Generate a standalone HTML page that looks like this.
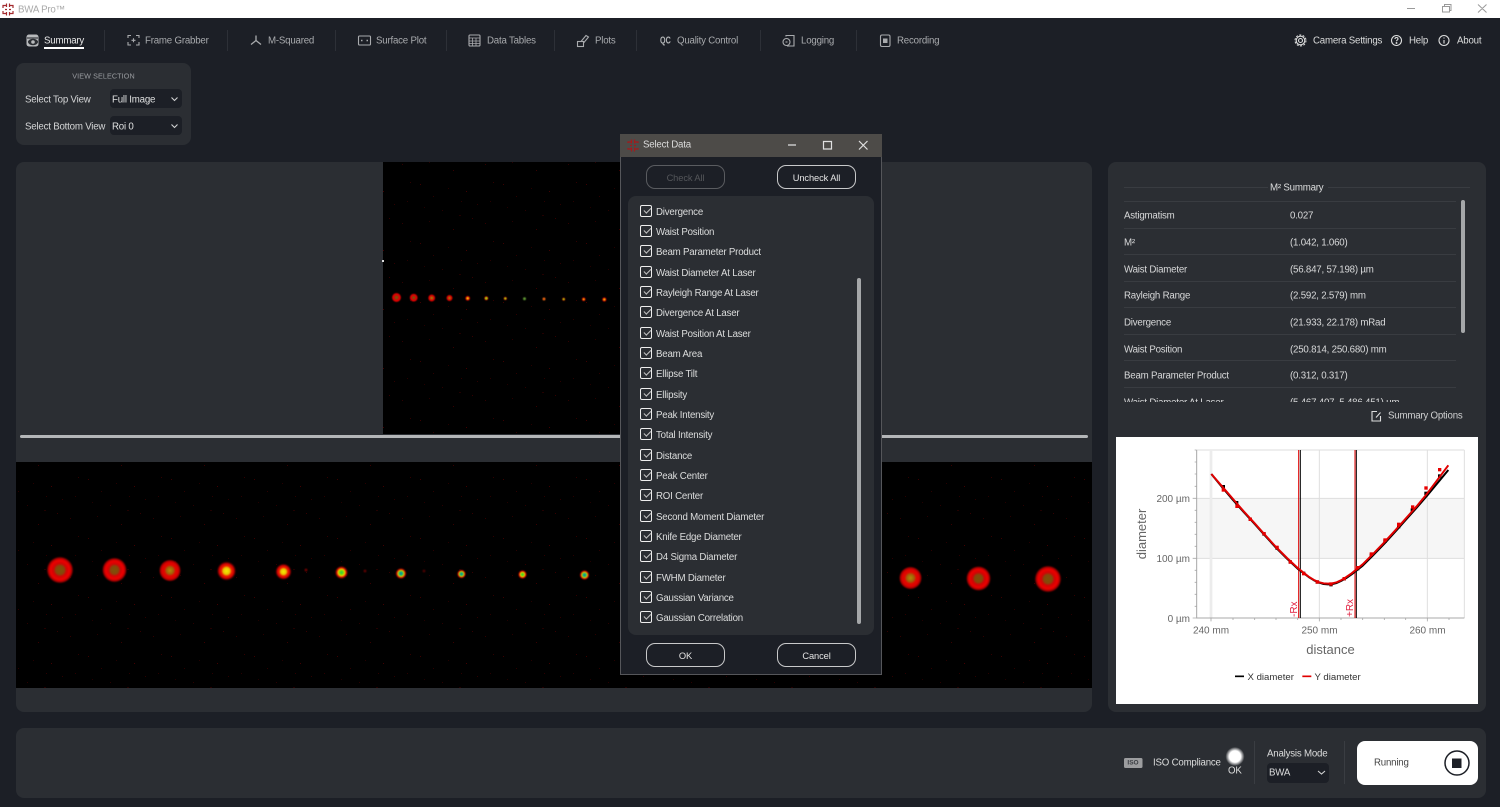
<!DOCTYPE html>
<html lang="en"><head><meta charset="utf-8"><title>BWA Pro</title>
<style>
html,body{margin:0;padding:0;width:1500px;height:807px;overflow:hidden;background:#1c1f26;font-family:"Liberation Sans",sans-serif;font-size:9.7px;color:#d8d9da}
div,span{position:absolute;box-sizing:border-box}
.t{white-space:nowrap;line-height:14px;height:14px;letter-spacing:-.2px;transform:translateY(1.5px)}
.nav{color:#a9abae;top:33px}
.sep{width:1px;top:30px;height:21px;background:#2d3037}
.panel{background:#2b2e33;border-radius:8px}
.sel{background:#1c1f26;border-radius:4px}
.row{left:0;width:230px;height:14px;line-height:17px;white-space:nowrap;letter-spacing:-.2px;padding-left:28px;color:#dcdddd}
.row:before{content:"";position:absolute;left:12px;top:1px;width:12px;height:12px;border:1.4px solid #eee;border-radius:2px;box-sizing:border-box}
.row:after{content:"";position:absolute;left:15.5px;top:3.5px;width:5.5px;height:3px;border-left:1px solid #c4c4c4;border-bottom:1px solid #c4c4c4;transform:rotate(-45deg)}
.btn{border:1px solid #c8c9ca;border-radius:9px;text-align:center;line-height:24px;height:24px;width:79px;color:#e4e4e4;font-size:9.3px;letter-spacing:-.1px}
.line{left:16px;width:332px;height:1px;background:#393c41}
.k{left:16px}.v{left:182px}
svg{position:absolute;left:0;top:0}
</style></head><body>

<!-- title bar -->
<div style="left:0;top:0;width:1500px;height:18px;background:#fff"></div>
<div class="t" style="left:18px;top:2px;color:#a8a8a8">BWA Pro™</div>

<!-- view selection -->
<div class="panel" style="left:16px;top:63px;width:175px;height:82px"></div>
<div class="t" style="left:16px;width:175px;text-align:center;top:68px;font-size:7.2px;color:#9a9da1;letter-spacing:.1px">VIEW SELECTION</div>
<div class="t" style="left:25px;top:91.500px;color:#d5d6d7">Select Top View</div>
<div class="t" style="left:25px;top:118.500px;color:#d5d6d7">Select Bottom View</div>
<div class="sel" style="left:110px;top:89px;width:72px;height:19px"></div>
<div class="sel" style="left:110px;top:116px;width:72px;height:19px"></div>
<div class="t" style="left:112px;top:91.500px;color:#dfe0e0">Full Image</div>
<div class="t" style="left:112px;top:118.500px;color:#dfe0e0">Roi 0</div>

<!-- nav -->
<div class="t" style="left:44px;top:33px;color:#e8e8e8">Summary</div>
<div style="left:44px;top:47px;width:40px;height:2px;background:#fff"></div>
<div class="t nav" style="left:145px">Frame Grabber</div>
<div class="t nav" style="left:268px">M-Squared</div>
<div class="t nav" style="left:376px">Surface Plot</div>
<div class="t nav" style="left:487px">Data Tables</div>
<div class="t nav" style="left:595px">Plots</div>
<div class="t nav" style="left:677px">Quality Control</div>
<div class="t nav" style="left:801px">Logging</div>
<div class="t nav" style="left:897px">Recording</div>
<div class="t nav" style="left:660px;font-weight:bold;color:#b4b6b8;font-size:10px;letter-spacing:0;transform:translateY(1.5px) scaleX(.72);transform-origin:0 0">QC</div>
<div class="sep" style="left:104px"></div><div class="sep" style="left:227px"></div><div class="sep" style="left:335px"></div><div class="sep" style="left:446px"></div><div class="sep" style="left:554px"></div><div class="sep" style="left:636px"></div><div class="sep" style="left:760px"></div><div class="sep" style="left:856px"></div>
<div class="t" style="left:1313px;top:33px;color:#dcdddd">Camera Settings</div>
<div class="t" style="left:1409px;top:33px;color:#dcdddd">Help</div>
<div class="t" style="left:1457px;top:33px;color:#dcdddd">About</div>

<!-- main panels -->
<div class="panel" style="left:16px;top:162px;width:1076px;height:550px"></div>
<div style="left:383px;top:162px;width:272px;height:272px;background:#000"></div>
<div style="left:20px;top:435px;width:1068px;height:3px;background:#b4b6b8;border-radius:2px"></div>
<div style="left:16px;top:462px;width:1076px;height:226px;background:#000"></div>
<div class="panel" style="left:1108px;top:162px;width:378px;height:550px"></div>
<div class="panel" style="left:16px;top:728px;width:1470px;height:70px"></div>

<!-- beam images + all icons -->
<svg width="1500" height="807" viewBox="0 0 1500 807">
<defs>
<radialGradient id="a"><stop offset="0" stop-color="#7c5208"/><stop offset=".32" stop-color="#86460a"/><stop offset=".48" stop-color="#d00404"/><stop offset=".72" stop-color="#ee0000"/><stop offset=".88" stop-color="#a00000"/><stop offset="1" stop-color="#400000" stop-opacity=".3"/></radialGradient>
<radialGradient id="b"><stop offset="0" stop-color="#b08a08"/><stop offset=".32" stop-color="#a06008"/><stop offset=".5" stop-color="#e00a00"/><stop offset=".74" stop-color="#dd0000"/><stop offset=".9" stop-color="#900000"/><stop offset="1" stop-color="#400000" stop-opacity=".3"/></radialGradient>
<radialGradient id="c"><stop offset="0" stop-color="#f4f000"/><stop offset=".36" stop-color="#e8c000"/><stop offset=".54" stop-color="#ee2000"/><stop offset=".78" stop-color="#cc0000"/><stop offset="1" stop-color="#400000" stop-opacity=".4"/></radialGradient>
<radialGradient id="d"><stop offset="0" stop-color="#20c060"/><stop offset=".3" stop-color="#70e000"/><stop offset=".5" stop-color="#f0d000"/><stop offset=".72" stop-color="#e81000"/><stop offset="1" stop-color="#400000" stop-opacity=".4"/></radialGradient>
<radialGradient id="e"><stop offset="0" stop-color="#0a70c0"/><stop offset=".3" stop-color="#10c070"/><stop offset=".55" stop-color="#d0d000"/><stop offset=".75" stop-color="#e01000"/><stop offset="1" stop-color="#400000" stop-opacity=".4"/></radialGradient>
<radialGradient id="g"><stop offset="0" stop-color="#fff"/><stop offset=".6" stop-color="#fff"/><stop offset="1" stop-color="#fff" stop-opacity="0"/></radialGradient>
<pattern id="n" width="83" height="59" patternUnits="userSpaceOnUse">
<rect x="5" y="7" width="1" height="1" fill="#3c0000"/><rect x="27" y="33" width="1" height="1" fill="#2a0000"/><rect x="51" y="14" width="1" height="1" fill="#420000"/><rect x="70" y="46" width="1" height="1" fill="#300000"/><rect x="38" y="52" width="1" height="1" fill="#380000"/><rect x="14" y="44" width="1" height="1" fill="#280000"/><rect x="62" y="27" width="1" height="1" fill="#2c0000"/><rect x="78" y="5" width="1" height="1" fill="#300000"/><rect x="44" y="38" width="2" height="1" fill="#220000"/><rect x="18" y="19" width="1" height="1" fill="#2c0000"/><rect x="33" y="11" width="1" height="1" fill="#260000"/><rect x="57" y="41" width="1" height="1" fill="#340000"/><rect x="75" y="24" width="1" height="1" fill="#280000"/><rect x="9" y="30" width="1" height="1" fill="#220000"/><rect x="46" y="24" width="1" height="1" fill="#2a0000"/>
</pattern>
</defs>
<rect x="383" y="162" width="272" height="272" fill="url(#n)"/>
<rect x="16" y="462" width="1076" height="226" fill="url(#n)"/>
<rect x="382" y="260" width="2" height="2" fill="#ddd"/>
<g style="filter:blur(.4px)">
<!-- top spots -->
<circle cx="396.500" cy="297.500" r="4.800" fill="url(#a)"/><circle cx="413.700" cy="297.700" r="4.200" fill="url(#a)"/><circle cx="431.700" cy="298" r="3.700" fill="url(#b)"/><circle cx="449.500" cy="298" r="3.200" fill="url(#b)"/><circle cx="467.700" cy="298.300" r="2.600" fill="url(#c)"/><circle cx="486.300" cy="298.300" r="2.200" fill="url(#d)"/><circle cx="505.300" cy="298.500" r="1.800" fill="url(#d)"/><circle cx="524.500" cy="298.700" r="1.500" fill="#5a9030"/><circle cx="544" cy="299" r="1.500" fill="#e06010"/><circle cx="563.700" cy="299.200" r="1.700" fill="url(#d)"/><circle cx="583.700" cy="299.300" r="2" fill="url(#c)"/><circle cx="604.300" cy="299.500" r="2.300" fill="url(#c)"/>
<!-- bottom spots -->
<circle cx="60" cy="570" r="13.500" fill="url(#a)"/><circle cx="114.500" cy="570" r="12.500" fill="url(#a)"/><circle cx="170" cy="570.500" r="11" fill="url(#b)"/><circle cx="226.500" cy="571" r="9.500" fill="url(#c)"/><circle cx="283.500" cy="571.700" r="8" fill="url(#c)"/><circle cx="341.500" cy="572.500" r="6.500" fill="url(#d)"/><circle cx="401" cy="573.500" r="5.500" fill="url(#e)"/><circle cx="461.500" cy="574" r="4.500" fill="url(#e)"/><circle cx="522.500" cy="574.500" r="4.500" fill="url(#d)"/><circle cx="584.500" cy="575" r="5" fill="url(#e)"/>
<circle cx="910.500" cy="578" r="11.500" fill="url(#b)"/><circle cx="978.500" cy="578.500" r="12.500" fill="url(#a)"/><circle cx="1048" cy="579" r="13.500" fill="url(#a)"/>
<circle cx="306" cy="570" r="1.500" fill="#600000"/><circle cx="365" cy="571" r="1.500" fill="#500000"/><circle cx="424" cy="571" r="1.500" fill="#400000"/>
</g>

<!-- logo -->
<g fill="none" stroke="#a32a2e" stroke-width="1.200"><path d="M3 8V5.500H6.500M9.500 5.500H13V8M3 11V13.500H6.500M9.500 13.500H13V11M6.500 3.500V7M9.500 3.500V7M6.500 12V15.500M9.500 12V15.500M5 9.500H7M9 9.500H11"/></g>
<!-- window controls -->
<g fill="none" stroke="#9a9a9a" stroke-width="1"><path d="M1407 8.500H1415M1442.500 6.500H1449.500V12H1442.500ZM1444.500 6V4.500H1451V10.500H1450M1478 4.500L1486.500 12.500M1486.500 4.500L1478 12.500"/></g>
<!-- chevrons -->
<g fill="none" stroke="#d0d1d2" stroke-width="1.100"><path d="M171.500 97.500L174.500 100.500L177.500 97.500M171.500 124.500L174.500 127.500L177.500 124.500"/></g>

<!-- nav icons -->
<g fill="none" stroke="#a9abae" stroke-width="1.100">
<rect x="26.500" y="34.500" width="12" height="12" rx="2.500" fill="#b8babc" stroke="none"/><ellipse cx="33" cy="42" rx="5" ry="3.200" fill="#2b2e33" stroke="none"/><circle cx="33" cy="42" r="1.800" fill="#b8babc" stroke="none"/><path d="M27 38H38" stroke="#2b2e33"/>
<path d="M128 38V35.500H131M136 35.500H139V38M128 42V45H131M136 45H139V42M131.500 40.300H135.500M133.500 38.300V42.300"/>
<path d="M256 40.500V35.500M256 40.500L251 44.500M256 40.500L261 44.500" stroke-width="1.300"/>
<rect x="358.500" y="36" width="12" height="9" rx="1"/><path d="M361 40.500H362.500M366.500 40.500H368" stroke-width="1.600"/>
<rect x="469" y="35" width="11" height="11" rx="1"/><path d="M469 38H480M469 41H480M469 43.500H480M472.500 38V46M476 38V46" stroke-width=".8"/>
<rect x="577.500" y="41.500" width="6" height="5"/><path d="M581 41.500L586 35.500L588.500 37L583.500 43" />
<path d="M786 36.500V35.500H794V46H787"/><circle cx="786.500" cy="42" r="3.500" fill="#1c1f26"/><path d="M785.500 42H787.500"/>
<rect x="880.500" y="35" width="9.500" height="11.500" rx="1.500"/><rect x="883" y="38.500" width="4.500" height="4.500" fill="#a9abae" stroke="none"/>
</g>
<g fill="none" stroke="#dcdddd" stroke-width="1.100">
<circle cx="1300.500" cy="40.500" r="2"/><circle cx="1300.500" cy="40.500" r="4.300"/><circle cx="1300.500" cy="40.500" r="5.500" stroke-dasharray="2 1.500" stroke-width="1"/>
<circle cx="1396.500" cy="40.500" r="5"/><path d="M1395 39c0-2 3-2 3 0c0 1-1.500 1-1.500 2.300"/><circle cx="1396.500" cy="43" r=".4"/>
<circle cx="1444" cy="40.500" r="5"/><path d="M1444 40V43.500M1444 37.500V38.500"/>
<path d="M1377 411.500H1372V421H1380.500V416M1376 417.500L1380.500 412.500"/>
</g>

<!-- plot background -->
<rect x="1116" y="437" width="362" height="267" fill="#fff"/>
<g transform="translate(1110 430) scale(.33333)">
<rect x="260" y="205" width="803" height="180" fill="#f6f6f6"/>
<g stroke="#dedede" stroke-width="3" fill="none"><path d="M260 60H1063M260 205H1063M260 385H1063M1063 60V564M628 60V564M952 60V564"/><path d="M303 60V564" stroke="#ececec" stroke-width="8"/></g>
<path d="M260 60V564H1063" stroke="#a8a8a8" stroke-width="3" fill="none"/>
<path d="M254 60H260M254 96H260M254 132H260M254 169H260M248 205H260M254 241H260M254 277H260M254 313H260M254 349H260M248 385H260M254 421H260M254 457H260M254 493H260M254 529H260M248 564H260M303 564V574M369 564V570M434 564V570M498 564V570M563 564V570M628 564V574M693 564V570M758 564V570M823 564V570M887 564V570M952 564V574M1017 564V570" stroke="#a8a8a8" stroke-width="2.500" fill="none"/>
<g stroke-width="3" fill="none"><path d="M571 60V564M739 60V564" stroke="#000"/><path d="M566 60V564M735 60V564" stroke="#e00000"/></g>
<g fill="#000"><rect x="335" y="165" width="10" height="10"/><rect x="375" y="213" width="10" height="10"/><rect x="416" y="263" width="10" height="10"/><rect x="457" y="307" width="10" height="10"/><rect x="496" y="349" width="10" height="10"/><rect x="536" y="391" width="10" height="10"/><rect x="576" y="425" width="10" height="10"/><rect x="617" y="451" width="10" height="10"/><rect x="658" y="459" width="10" height="10"/><rect x="698" y="441" width="10" height="10"/><rect x="738" y="411" width="10" height="10"/><rect x="779" y="371" width="10" height="10"/><rect x="820" y="329" width="10" height="10"/><rect x="861" y="285" width="10" height="10"/><rect x="902" y="235" width="10" height="10"/><rect x="943" y="185" width="10" height="10"/><rect x="984" y="133" width="10" height="10"/></g>
<polyline points="304,132 336,171 369,210 401,246 434,282 466,318 498,353 531,386 563,416 596,441 612,451 628,458 641,462 654,463 667,462 680,459 693,453 709,444 725,433 758,407 790,375 823,341 855,306 887,270 920,233 952,196 1015,120" fill="none" stroke="#000" stroke-width="6" stroke-linejoin="round"/>
<polyline points="304,132 336,169 369,207 401,244 434,280 466,316 498,351 531,384 563,414 596,440 612,450 628,457 641,460 654,461 667,460 680,457 693,451 709,441 725,430 758,403 790,371 823,337 855,302 887,266 920,229 952,190 1015,106" fill="none" stroke="#e00000" stroke-width="6" stroke-linejoin="round"/>
<g fill="#e80000"><rect x="335" y="175" width="10" height="10"/><rect x="376" y="224" width="10" height="10"/><rect x="416" y="263" width="10" height="10"/><rect x="457" y="306" width="10" height="10"/><rect x="496" y="347" width="10" height="10"/><rect x="536" y="391" width="10" height="10"/><rect x="576" y="426" width="10" height="10"/><rect x="617" y="451" width="10" height="10"/><rect x="658" y="457" width="10" height="10"/><rect x="698" y="441" width="10" height="10"/><rect x="738" y="408" width="10" height="10"/><rect x="779" y="367" width="10" height="10"/><rect x="820" y="325" width="10" height="10"/><rect x="861" y="278" width="10" height="10"/><rect x="903" y="226" width="10" height="10"/><rect x="943" y="169" width="10" height="10"/><rect x="984" y="114" width="10" height="10"/></g>
<path d="M375 739H402" stroke="#000" stroke-width="5"/><path d="M577 739H604" stroke="#e00000" stroke-width="5"/>
</g>
<g font-family="Liberation Sans, sans-serif" fill="#666" font-size="10">
<text x="1190" y="502" text-anchor="end">200 µm</text><text x="1190" y="562" text-anchor="end">100 µm</text><text x="1190" y="622" text-anchor="end">0 µm</text>
<text x="1211" y="633.500" text-anchor="middle">240 mm</text><text x="1319.500" y="633.500" text-anchor="middle">250 mm</text><text x="1427.500" y="633.500" text-anchor="middle">260 mm</text>
<text x="1330.500" y="654" text-anchor="middle" font-size="13">distance</text>
<text transform="translate(1146 534) rotate(-90)" text-anchor="middle" font-size="13">diameter</text>
<text x="1247.500" y="680" font-size="9.600" fill="#333">X diameter</text><text x="1314.500" y="680" font-size="9.600" fill="#333">Y diameter</text>
<text transform="translate(1297 617) rotate(-90)" fill="#e02040" font-size="10">-Rx</text><text transform="translate(1353 617) rotate(-90)" fill="#e02040" font-size="10">+Rx</text>
</g>

<!-- bottom bar graphics -->
<rect x="1124" y="758" width="18.500" height="10" rx="1.500" fill="#9c9d9f"/>
<circle cx="1235" cy="756.500" r="9.500" fill="url(#g)"/>
<path d="M1254.500 741V784M1344.500 741V784" stroke="#3a3d42"/>
<rect x="1267" y="763" width="62" height="20" rx="4" fill="#1c1f26"/>
<path d="M1318 771L1321.500 774L1325 771" fill="none" stroke="#d0d1d2" stroke-width="1.100"/>
<rect x="1357" y="741" width="121" height="44" rx="8" fill="#fff"/>
<circle cx="1457" cy="763" r="12" fill="none" stroke="#1c1f26" stroke-width="1.500"/><rect x="1452" y="758.500" width="9.500" height="9.500" fill="#1c1f26"/>
</svg>

<div class="t" style="left:1124px;top:756px;width:18px;text-align:center;font-size:6.5px;font-weight:bold;color:#3a3d42;letter-spacing:0;height:12px;line-height:12px">ISO</div>
<div class="t" style="left:1153px;top:755px;color:#dcdddd">ISO Compliance</div>
<div class="t" style="left:1228px;top:763px;color:#dcdddd">OK</div>
<div class="t" style="left:1267px;top:746px;color:#dcdddd">Analysis Mode</div>
<div class="t" style="left:1269px;top:765px;color:#dcdddd">BWA</div>
<div class="t" style="left:1374px;top:755px;color:#444">Running</div>

<!-- summary table -->
<div style="left:1108px;top:162px;width:378px;height:240px;overflow:hidden">
<div style="left:16px;top:25px;width:144px;height:1px;background:#393c41"></div>
<div style="left:220px;top:25px;width:142px;height:1px;background:#393c41"></div>
<div class="t" style="left:162px;top:18px;color:#dcdddd">M² Summary</div>
<div class="line" style="top:39px"></div><div class="line" style="top:66px"></div><div class="line" style="top:92px"></div><div class="line" style="top:119px"></div><div class="line" style="top:145px"></div><div class="line" style="top:172px"></div><div class="line" style="top:198px"></div><div class="line" style="top:225px"></div>
<div class="t k" style="top:46px">Astigmatism</div><div class="t v" style="top:46px">0.027</div>
<div class="t k" style="top:73px">M²</div><div class="t v" style="top:73px">(1.042, 1.060)</div>
<div class="t k" style="top:100px">Waist Diameter</div><div class="t v" style="top:100px">(56.847, 57.198) µm</div>
<div class="t k" style="top:126px">Rayleigh Range</div><div class="t v" style="top:126px">(2.592, 2.579) mm</div>
<div class="t k" style="top:153px">Divergence</div><div class="t v" style="top:153px">(21.933, 22.178) mRad</div>
<div class="t k" style="top:180px">Waist Position</div><div class="t v" style="top:180px">(250.814, 250.680) mm</div>
<div class="t k" style="top:206px">Beam Parameter Product</div><div class="t v" style="top:206px">(0.312, 0.317)</div>
<div class="t k" style="top:233px">Waist Diameter At Laser</div><div class="t v" style="top:233px">(5.467.407, 5.486.451) µm</div>
<div style="left:353px;top:38px;width:4px;height:133px;background:#a5a7a9;border-radius:2px"></div>
</div>
<div class="t" style="left:1388px;top:408px;color:#d0d1d2">Summary Options</div>

<!-- dialog -->
<div style="left:620px;top:134px;width:262px;height:541px;background:#1c1f26;border:1px solid #55565a"></div>
<div style="left:620px;top:134px;width:262px;height:23px;background:#4d4b48"></div>
<div class="t" style="left:643px;top:137px;color:#dcdcdc">Select Data</div>
<svg width="1500" height="807" viewBox="0 0 1500 807" style="pointer-events:none">
<g fill="none" stroke="#a3191c" stroke-width="1.200"><path d="M628 143V142H631.500M634.500 142H638V143M628 148V149H631.500M634.500 149H638V148M631.500 139.500V143.500M634.500 139.500V143.500M631.500 147.500V151.500M634.500 147.500V151.500M630 145.500H632M634 145.500H636"/></g>
<g fill="none" stroke="#e0e0e0" stroke-width="1.200"><path d="M788 145H796M823.500 141.500H831.500V149H823.500ZM859 141L867.500 149.500M867.500 141L859 149.500"/></g>
</svg>
<div class="btn" style="left:646px;top:165px;border-color:#5a5c60;color:#54565a;">Check All</div>
<div class="btn" style="left:777px;top:165px">Uncheck All</div>
<div class="panel" style="left:628px;top:196px;width:246px;height:439px"></div>
<div style="left:628px;top:196px;width:246px;height:439px">
<div class="row" style="top:8px">Divergence</div>
<div class="row" style="top:28px">Waist Position</div>
<div class="row" style="top:48px">Beam Parameter Product</div>
<div class="row" style="top:69px">Waist Diameter At Laser</div>
<div class="row" style="top:89px">Rayleigh Range At Laser</div>
<div class="row" style="top:109px">Divergence At Laser</div>
<div class="row" style="top:130px">Waist Position At Laser</div>
<div class="row" style="top:150px">Beam Area</div>
<div class="row" style="top:170px">Ellipse Tilt</div>
<div class="row" style="top:191px">Ellipsity</div>
<div class="row" style="top:211px">Peak Intensity</div>
<div class="row" style="top:231px">Total Intensity</div>
<div class="row" style="top:252px">Distance</div>
<div class="row" style="top:272px">Peak Center</div>
<div class="row" style="top:292px">ROI Center</div>
<div class="row" style="top:313px">Second Moment Diameter</div>
<div class="row" style="top:333px">Knife Edge Diameter</div>
<div class="row" style="top:353px">D4 Sigma Diameter</div>
<div class="row" style="top:374px">FWHM Diameter</div>
<div class="row" style="top:394px">Gaussian Variance</div>
<div class="row" style="top:414px">Gaussian Correlation</div>
<div style="left:229px;top:82px;width:4px;height:346px;background:#a5a7a9;border-radius:2px"></div>
</div>
<div class="btn" style="left:646px;top:643px">OK</div>
<div class="btn" style="left:777px;top:643px">Cancel</div>
</body></html>
